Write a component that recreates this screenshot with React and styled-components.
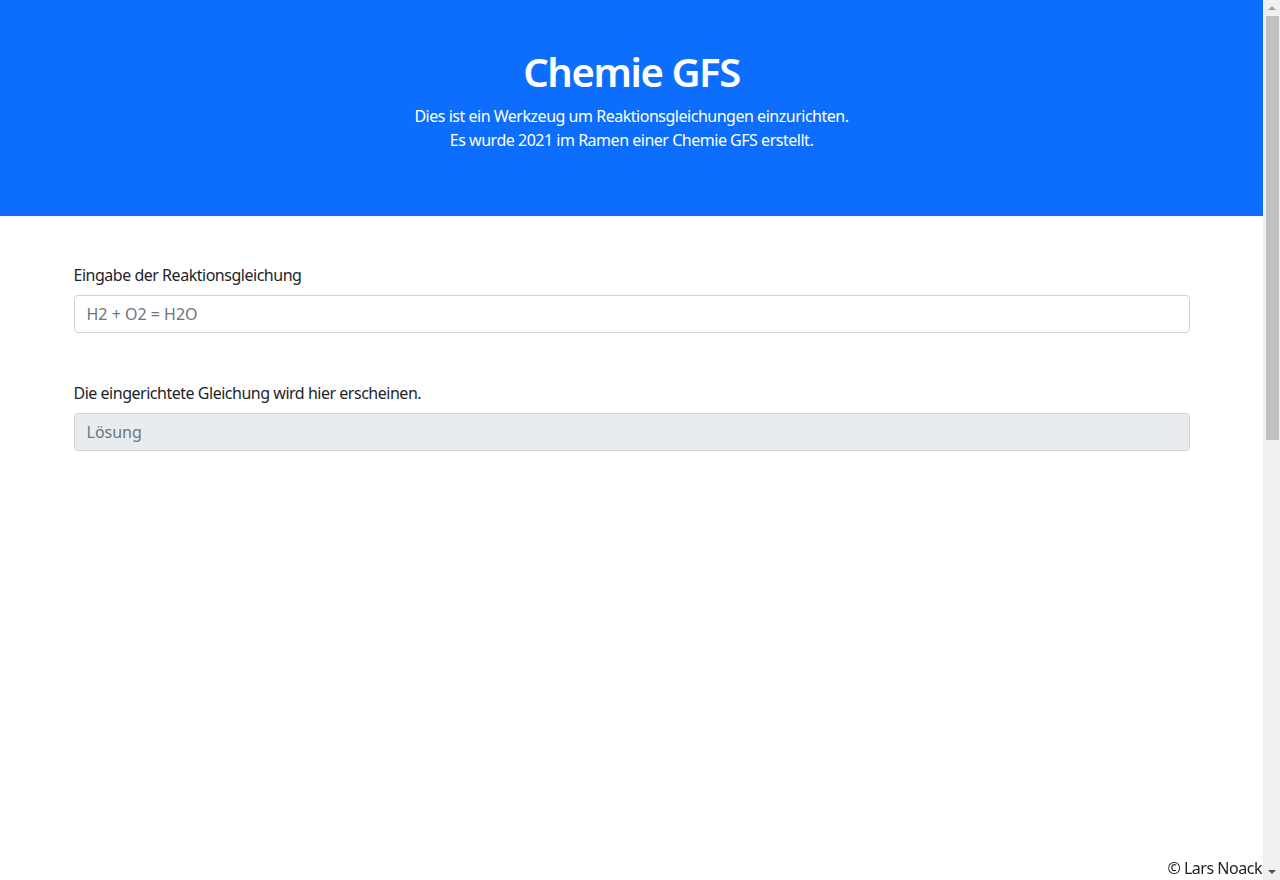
import React from 'react'
import styled, { createGlobalStyle } from 'styled-components'

const GlobalStyle = createGlobalStyle`
    * {
        box-sizing: border-box;
    }
    body {
        margin: 0;
        font-family: "Noto Sans", "Open Sans", sans-serif;
        font-size: 16px;
        line-height: 1.5;
        letter-spacing: -0.03em;
        color: #212529;
        background: #fff;
    }
`

const Page = styled.div`
    margin-right: 17px;
`

const Header = styled.header`
    background: #0d6efd;
    color: #fff;
    text-align: center;
    padding: 48px;
`

const Title = styled.h1`
    margin: 0 0 8px;
    font-size: 40px;
    line-height: 48px;
    font-weight: 600;
    letter-spacing: -0.035em;
`

const Lead = styled.p`
    margin: 0 0 16px;
    font-size: 16px;
    line-height: 24px;
`

const Container = styled.main`
    max-width: 1140px;
    margin: 0 auto;
    padding: 47px 12px 0;
`

const Field = styled.div`
    margin-bottom: 48px;
`

const Label = styled.label`
    display: block;
    margin-bottom: 8px;
    line-height: 24px;
`

const Input = styled.input`
    display: block;
    width: 100%;
    height: 38px;
    padding: 6px 12px;
    font: inherit;
    letter-spacing: normal;
    color: #212529;
    background: ${(p) => (p.disabled ? '#e9ecef' : '#fff')};
    border: 1px solid #ced4da;
    border-radius: 4px;
    outline: none;

    &::placeholder {
        color: #6c757d;
        opacity: 1;
    }
`

const Footer = styled.footer`
    position: fixed;
    right: 18px;
    bottom: 0;
    line-height: 24px;
`

/* stand-in for the browser's window scrollbar */
const ScrollTrack = styled.div`
    position: fixed;
    top: 0;
    right: 0;
    bottom: 0;
    width: 17px;
    background: #f0f0f0;
    display: flex;
    flex-direction: column;
    align-items: center;
`

const ScrollButton = styled.div`
    height: 16px;
    width: 17px;
    display: flex;
    align-items: center;
    justify-content: center;

    &::before {
        content: '';
        border-left: 4px solid transparent;
        border-right: 4px solid transparent;
        ${(p) =>
            p.down
                ? 'border-top: 4px solid #505050;'
                : 'border-bottom: 4px solid #a3a3a3;'}
    }
`

const ScrollThumb = styled.div`
    width: 13px;
    margin-left: 1px;
    height: 424px;
    background: #c1c1c1;
`

const ScrollSpace = styled.div`
    flex: 1;
`

export default function App() {
    return (
        <Page>
            <GlobalStyle />
            <Header>
                <Title>Chemie GFS</Title>
                <Lead>
                    Dies ist ein Werkzeug um Reaktionsgleichungen einzurichten.
                    <br />
                    Es wurde 2021 im Ramen einer Chemie GFS erstellt.
                </Lead>
            </Header>
            <Container>
                <Field>
                    <Label htmlFor="input">Eingabe der Reaktionsgleichung</Label>
                    <Input id="input" type="text" placeholder="H2 + O2 = H2O" />
                </Field>
                <Field>
                    <Label htmlFor="output">Die eingerichtete Gleichung wird hier erscheinen.</Label>
                    <Input id="output" type="text" placeholder="Lösung" disabled />
                </Field>
            </Container>
            <Footer>© Lars Noack</Footer>
            <ScrollTrack>
                <ScrollButton />
                <ScrollThumb />
                <ScrollSpace />
                <ScrollButton down />
            </ScrollTrack>
        </Page>
    )
}
